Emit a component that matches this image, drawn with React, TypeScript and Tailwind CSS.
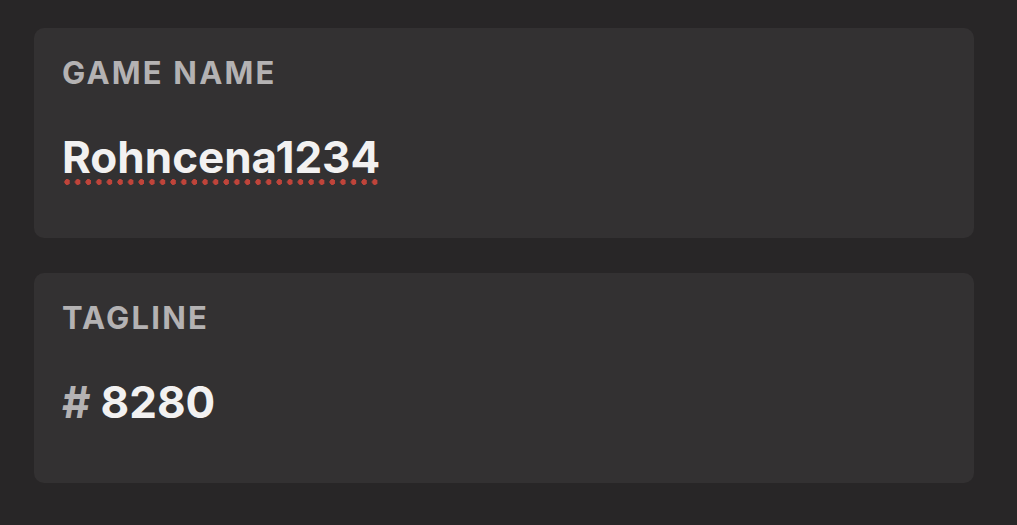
const dots =
  "pb-[1px] bg-[radial-gradient(circle,#c0443a_2.6px,transparent_3.1px)] bg-[length:10.3px_6px] [background-repeat:space_no-repeat] bg-[position:left_bottom]";

interface FieldCardProps {
  label: string;
  children: React.ReactNode;
}

function FieldCard({ label, children }: FieldCardProps) {
  return (
    <div className="h-[210px] rounded-[10px] bg-[#333132] px-[28px] pt-[29px]">
      <div className="text-[31px] leading-none font-bold tracking-[0.07em] text-[#b4b2b3]">
        {label}
      </div>
      <div className="mt-[47px] text-[44px] leading-none font-bold text-[#f2f1f1]">
        {children}
      </div>
    </div>
  );
}

export default function App() {
  return (
    <div className="min-h-[525px] w-full bg-[#282627] pt-[28px] font-['Inter','Noto_Sans',sans-serif]">
      <div className="ml-[34px] flex w-[940px] flex-col gap-[35px]">
        <FieldCard label="GAME NAME">
          <span className={dots}>Rohncena1234</span>
        </FieldCard>
        <FieldCard label="TAGLINE">
          <span className="mr-[10px] text-[#b4b2b3]">#</span>
          <span>8280</span>
        </FieldCard>
      </div>
    </div>
  );
}
